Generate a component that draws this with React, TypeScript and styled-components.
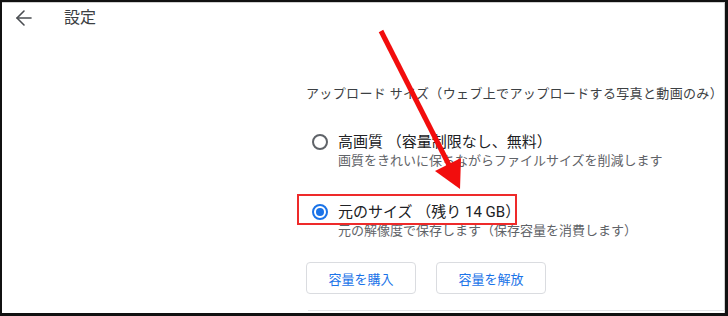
import React, { useState } from 'react';
import styled, { createGlobalStyle } from 'styled-components';
import { ArrowLeft } from 'lucide-react';

const GlobalStyle = createGlobalStyle`
  body {
    margin: 0;
    background: #fff;
    font-family: Roboto, "Noto Sans CJK JP", "Noto Sans", sans-serif;
  }
`;

const options = [
  {
    id: 'high',
    title: '高画質 （容量制限なし、無料）',
    desc: '画質をきれいに保ちながらファイルサイズを削減します',
  },
  {
    id: 'original',
    title: '元のサイズ （残り 14 GB）',
    desc: '元の解像度で保存します（保存容量を消費します）',
  },
];

const App = () => {
  const [selected, setSelected] = useState('original');

  return (
    <>
      <GlobalStyle />
      <Frame>
        <Header>
          <BackBtn>
            <ArrowLeft size={24} strokeWidth={1.6} />
          </BackBtn>
          <Title>設定</Title>
        </Header>

        <Body>
          <SectionLabel>アップロード サイズ（ウェブ上でアップロードする写真と動画のみ）</SectionLabel>

          {options.map((opt, i) => (
            <Option key={opt.id} $first={i === 0} onClick={() => setSelected(opt.id)}>
              <Radio $checked={selected === opt.id} />
              <OptionText>
                <OptionTitle>{opt.title}</OptionTitle>
                <OptionDesc>{opt.desc}</OptionDesc>
              </OptionText>
            </Option>
          ))}

          <Buttons>
            <OutlineBtn>容量を購入</OutlineBtn>
            <OutlineBtn>容量を解放</OutlineBtn>
          </Buttons>
          <Divider />
        </Body>

        <Highlight />
        <Annotation viewBox="0 0 728 316">
          <line x1="381" y1="31" x2="450" y2="167" stroke="#f20d0d" strokeWidth="5" />
          <polygon points="460,189 435,171 461,158" fill="#f20d0d" />
        </Annotation>
      </Frame>
    </>
  );
};

export default App;

const Frame = styled.div`
  position: relative;
  box-sizing: border-box;
  width: 728px;
  height: 316px;
  border-style: solid;
  border-color: #111;
  border-width: 2px 3px 3px 2px;
  background: #fff;
  overflow: hidden;
  box-shadow: inset 0 1px 0 #d0d0d0, inset -1px 0 0 #d0d0d0;
`;

const Header = styled.div`
  display: flex;
  align-items: center;
  height: 32px;
  padding-left: 10px;
`;

const BackBtn = styled.div`
  display: flex;
  align-items: center;
  color: #4a4d51;
  cursor: pointer;
`;

const Title = styled.div`
  margin-left: 28px;
  font-size: 16px;
  color: #3c4043;
  line-height: 20px;
`;

const Body = styled.div`
  display: flex;
  flex-direction: column;
  align-items: flex-start;
  margin-left: 304px;
  padding-top: 50px;
`;

const SectionLabel = styled.div`
  font-size: 13px;
  letter-spacing: 0.35px;
  line-height: 20px;
  color: #3c4043;
`;

const Option = styled.div<{ $first: boolean }>`
  display: flex;
  align-items: flex-start;
  margin-top: ${p => (p.$first ? '28px' : '32px')};
  cursor: pointer;
`;

const Radio = styled.span<{ $checked: boolean }>`
  position: relative;
  box-sizing: border-box;
  width: 16px;
  height: 16px;
  margin: 2px 10px 0 6px;
  border-radius: 50%;
  border: 2px solid ${p => (p.$checked ? '#1a73e8' : '#5f6368')};
  &::after {
    content: '';
    display: ${p => (p.$checked ? 'block' : 'none')};
    position: absolute;
    inset: 2px;
    border-radius: 50%;
    background: #1a73e8;
  }
`;

const OptionText = styled.div`
  display: flex;
  flex-direction: column;
`;

const OptionTitle = styled.div`
  font-size: 15px;
  line-height: 20px;
  color: #202124;
`;

const OptionDesc = styled.div`
  font-size: 13px;
  line-height: 18px;
  color: #5f6368;
`;

const Buttons = styled.div`
  display: flex;
  gap: 20px;
  margin-top: 22px;
`;

const OutlineBtn = styled.button`
  box-sizing: border-box;
  width: 110px;
  height: 32px;
  margin: 0;
  background: #fff;
  border: 1px solid #dadce0;
  border-radius: 4px;
  font-family: inherit;
  font-size: 13px;
  color: #1a73e8;
  cursor: pointer;
`;

const Divider = styled.div`
  align-self: stretch;
  height: 1px;
  margin-top: 16px;
  margin-left: 2px;
  background: #e3e5e8;
`;

const Highlight = styled.div`
  position: absolute;
  left: 295px;
  top: 192px;
  width: 220px;
  height: 31px;
  box-sizing: border-box;
  border: 2px solid #ee2a2a;
  pointer-events: none;
`;

const Annotation = styled.svg`
  position: absolute;
  left: -2px;
  top: -2px;
  width: 728px;
  height: 316px;
  pointer-events: none;
`;
